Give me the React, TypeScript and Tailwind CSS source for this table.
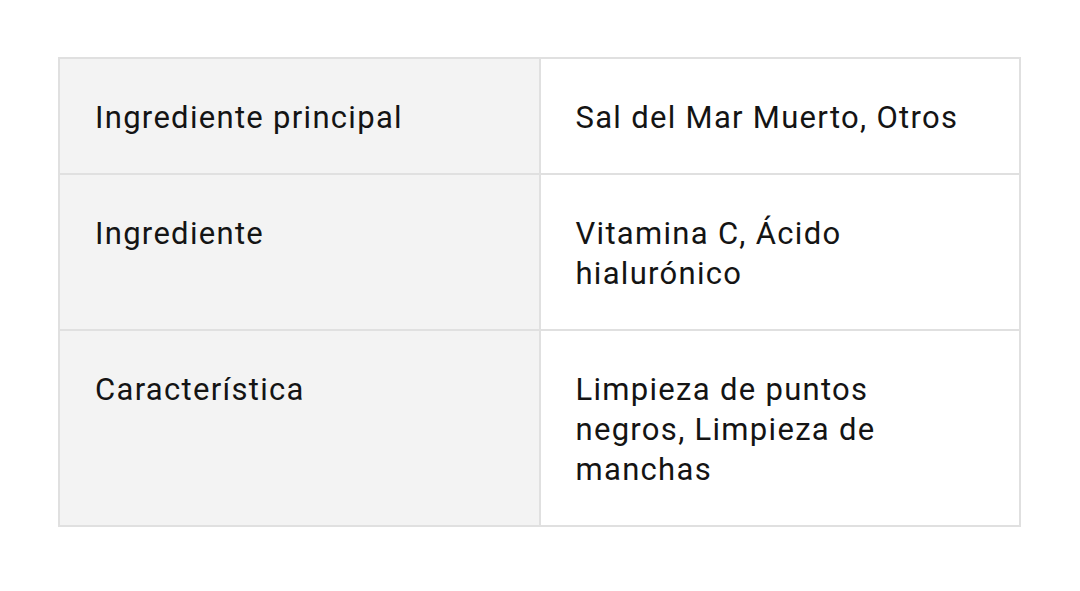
const rows = [
  { label: 'Ingrediente principal', value: 'Sal del Mar Muerto, Otros' },
  { label: 'Ingrediente', value: 'Vitamina C, Ácido hialurónico' },
  { label: 'Característica', value: 'Limpieza de puntos negros, Limpieza de manchas' },
];

export default function App() {
  return (
    <div className="min-h-[591px] bg-white pt-[57px] pl-[58px] font-['Roboto',sans-serif] text-[#141414]">
      <table className="w-[963px] table-fixed border-collapse border-2 border-[#e0e0e0]">
        <tbody>
          {rows.map((row) => (
            <tr key={row.label}>
              <td className="w-1/2 border-2 border-[#e0e0e0] bg-[#f3f3f3] px-[35px] pt-[39px] pb-[35px] align-top text-[31px] leading-[40px] tracking-[1.3px]">
                {row.label}
              </td>
              <td className="w-1/2 border-2 border-[#e0e0e0] px-[35px] pt-[39px] pb-[35px] align-top text-[31px] leading-[40px] tracking-[1.3px]">
                {row.value}
              </td>
            </tr>
          ))}
        </tbody>
      </table>
    </div>
  );
}
